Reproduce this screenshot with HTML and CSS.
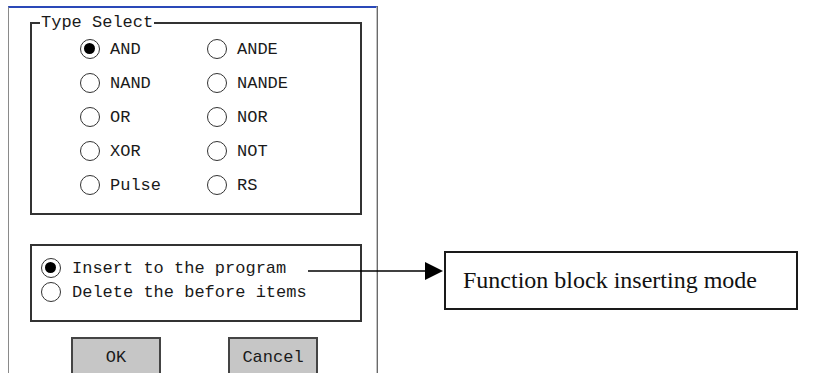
FILE: index.html
```html
<!DOCTYPE html>
<html lang="en">
<head>
<title>Function block type select</title>
<meta charset="utf-8">
<link rel="stylesheet" href="styles.css">
</head>
<body>
<div class="page">
    <div class="dialog">
        <fieldset class="group">
            <legend>Type Select</legend>
            <div class="types">
                <label class="opt"><span class="radio on"></span>AND</label>
                <label class="opt"><span class="radio"></span>ANDE</label>
                <label class="opt"><span class="radio"></span>NAND</label>
                <label class="opt"><span class="radio"></span>NANDE</label>
                <label class="opt"><span class="radio"></span>OR</label>
                <label class="opt"><span class="radio"></span>NOR</label>
                <label class="opt"><span class="radio"></span>XOR</label>
                <label class="opt"><span class="radio"></span>NOT</label>
                <label class="opt"><span class="radio"></span>Pulse</label>
                <label class="opt"><span class="radio"></span>RS</label>
            </div>
        </fieldset>

        <div class="mode">
            <label class="opt"><span class="radio on"></span>Insert to the program</label>
            <label class="opt"><span class="radio"></span>Delete the before items</label>
        </div>

        <div class="buttons">
            <button class="btn">OK</button>
            <button class="btn">Cancel</button>
        </div>
    </div>

    <div class="note">Function block inserting mode</div>

    <!-- callout arrow, drawn over the dialog edge -->
    <svg class="arrow" width="140" height="20" viewBox="0 0 140 20">
        <line x1="2" y1="10" x2="121" y2="10" stroke="#000" stroke-width="1.5"/>
        <polygon points="119,1 137,10 119,19" fill="#000"/>
    </svg>
</div>
</body>
</html>
```

FILE: styles.css
```css
body{margin: 0;padding: 0;background: #FFF;overflow: hidden;}
.page{position: relative;display: flex;align-items: flex-start;height: 373px;overflow: hidden;}

.dialog{width: 369px;height: 380px;margin: 6px 0 0 8px;box-sizing: border-box;border-top: 2px solid #2a48b8;border-left: 1px solid #8a8a8a;border-right: 1px solid #c4c4c4;box-shadow: 1px 0 0 #6a6a6a;font-family: "Liberation Mono", monospace;font-size: 17px;color: #1a1a1a;flex-shrink: 0;}

.group{width: 332px;box-sizing: border-box;margin: 8px 0 0 21px;padding: 0;border: 2px solid #333;}
.group legend{margin-left: 8px;padding: 0 1px;line-height: 14px;}
.types{display: grid;grid-template-columns: 127px auto;grid-auto-rows: 34px;padding: 2px 0 11px 48px;}

.opt{display: flex;align-items: center;gap: 10px;white-space: nowrap;}
.radio{width: 20px;height: 20px;box-sizing: border-box;border: 1.5px solid #333;border-radius: 50%;position: relative;flex-shrink: 0;}
.radio.on::after{content: "";position: absolute;left: 3px;top: 3px;width: 11px;height: 11px;border-radius: 50%;background: #000;}

.mode{width: 332px;box-sizing: border-box;margin: 29px 0 0 21px;padding: 10px 0 16px 9px;border: 2px solid #333;display: grid;grid-auto-rows: 24px;}
.mode .opt{gap: 11px;}

.buttons{display: flex;gap: 67px;margin-top: 15px;padding-left: 62px;}
.btn{width: 90px;height: 40px;background: #c6c6c6;border: 2px solid #444;font-family: "Liberation Mono", monospace;font-size: 17px;color: #1a1a1a;padding: 0;}

.note{width: 354px;height: 59px;box-sizing: border-box;margin: 251px 0 0 67px;padding-left: 17px;border: 2px solid #1a1a1a;font-family: "Liberation Serif", serif;font-size: 24px;line-height: 55px;color: #111;white-space: nowrap;flex-shrink: 0;}

.arrow{position: absolute;left: 306px;top: 261px;}
```
